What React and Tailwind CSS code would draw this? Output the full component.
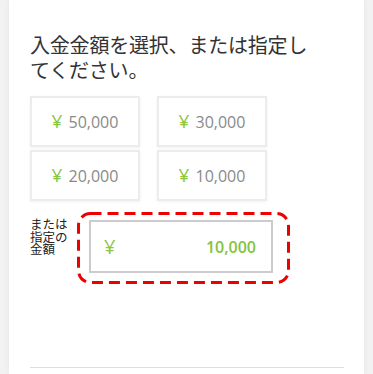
export default function App() {
  const amounts = ["50,000", "30,000", "20,000", "10,000"];
  return (
    <div className="w-[373px] h-[374px] overflow-hidden bg-[#f2f2f2] flex" style={{ fontFamily: '"Open Sans", "Noto Sans CJK JP", sans-serif' }}>
      <div className="ml-[9px] w-[355px] h-full bg-white shadow-[0_0_6px_rgba(0,0,0,0.06)] pl-[21px] pr-[20px] pt-[32px] flex flex-col">
        <h1 className="text-[20px] leading-[25px] text-[#333] font-normal tracking-[-0.2px]" style={{ fontFamily: '"Noto Sans CJK JP", sans-serif' }}>
          入金金額を選択、または指定し<br />てください。
        </h1>
        <div className="mt-[14px] grid grid-cols-[110px_110px] gap-x-[17px] gap-y-[3px]">
          {amounts.map((a) => (
            <div key={a} className="h-[51px] border-2 border-[#ececec] bg-white shadow-[0_1px_3px_rgba(0,0,0,0.06)] flex items-center justify-center text-[16px] text-[#8a8a8a]">
              <span className="text-[#8cc63f] text-[19px] leading-none mr-[6px]">¥</span>
              <span>{a}</span>
            </div>
          ))}
        </div>
        <div className="mt-[11px] flex items-start">
          <div className="w-[47px] pt-[6px] text-[12.5px] leading-[12.5px] text-[#222]" style={{ fontFamily: '"Noto Sans CJK JP", sans-serif' }}>
            または<br />指定の<br />金額
          </div>
          <div className="relative pt-[8px] pb-[8px] pl-[12px] pr-[17px]">
            <svg className="absolute inset-0 pointer-events-none" width="213" height="72" viewBox="0 0 213 72">
              <rect x="1.5" y="1.5" width="210" height="69" rx="12" ry="12" fill="none" stroke="#ee0000" strokeWidth="3" strokeDasharray="11 6" />
            </svg>
            <div className="w-[184px] h-[53px] border-2 border-[#cccccc] bg-white flex items-center justify-between pl-[13px] pr-[15px]">
              <span className="text-[#8cc63f] text-[20px]">¥</span>
              <span className="text-[#82c341] text-[16px] font-semibold">10,000</span>
            </div>
          </div>
        </div>
        <div className="mt-auto mb-[6px] h-px bg-[#dddddd]" />
      </div>
    </div>
  );
}
